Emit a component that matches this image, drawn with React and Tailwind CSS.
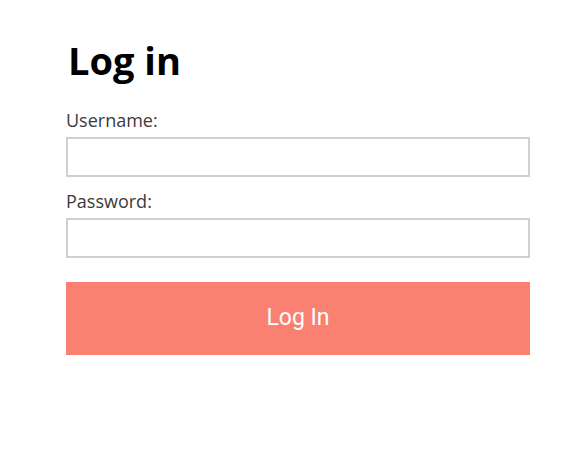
export default function App() {
  return (
    <div className="min-h-[451px] w-full bg-white font-[family-name:'Open_Sans',sans-serif]">
      <form className="ml-[66px] w-[464px] pt-[36px]" onSubmit={(e) => e.preventDefault()}>
        <h1 className="ml-[2px] text-[38px] font-bold leading-[48px] text-black">Log in</h1>

        <label className="mt-[24px] block text-[18px] leading-[24px] text-[#3a3a3a]">Username:</label>
        <input
          type="text"
          className="mt-[5px] block h-[40px] w-full border-2 border-[#d0d0d0] bg-white px-2 outline-none"
        />

        <label className="mt-[12px] block text-[18px] leading-[24px] text-[#3a3a3a]">Password:</label>
        <input
          type="password"
          className="mt-[5px] block h-[40px] w-full border-2 border-[#d0d0d0] bg-white px-2 outline-none"
        />

        <button
          type="submit"
          className="mt-[24px] block h-[73px] w-full bg-[#fa8072] font-[family-name:Roboto,sans-serif] text-[23px] text-white"
        >
          Log In
        </button>
      </form>
    </div>
  );
}
